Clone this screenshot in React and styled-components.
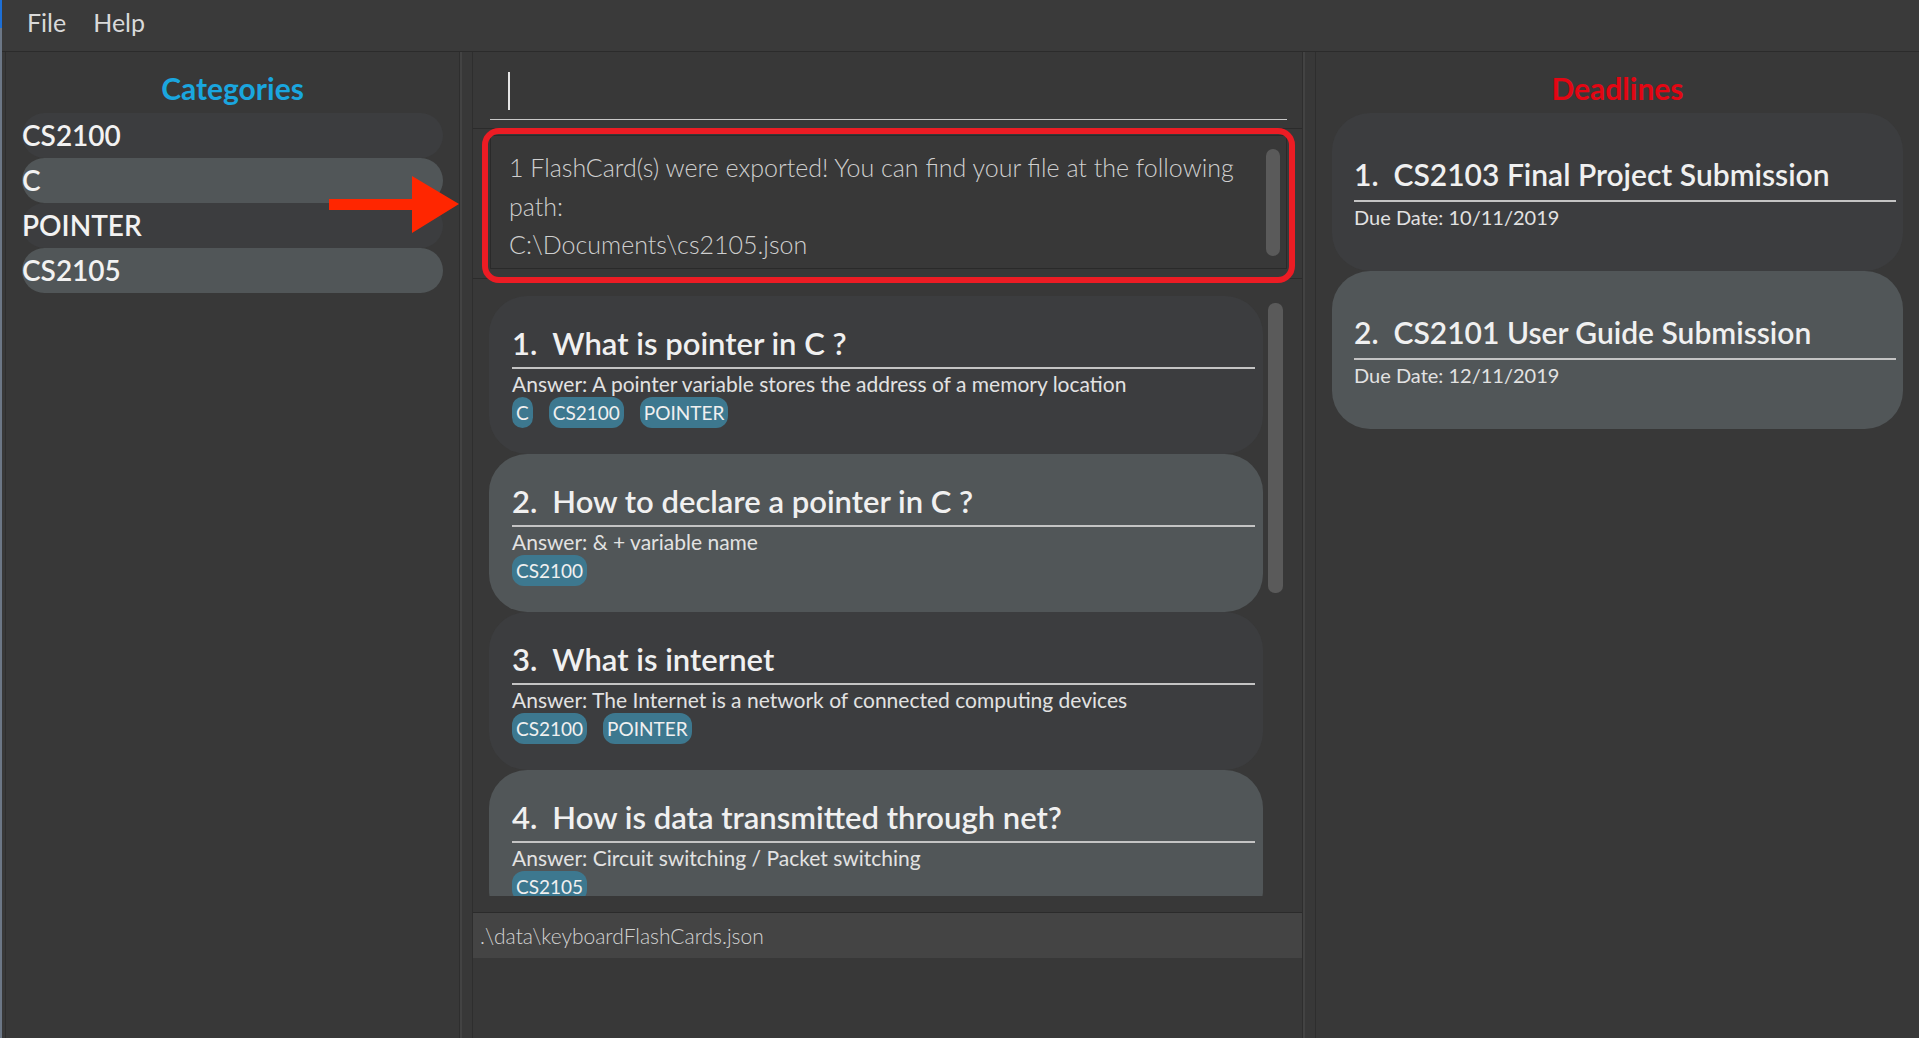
import React from 'react';
import styled, { createGlobalStyle } from 'styled-components';

const GlobalStyle = createGlobalStyle`
  *, *::before, *::after { box-sizing: border-box; }
  html, body { margin: 0; padding: 0; background: #383838; }
  body { font-family: Lato, "Open Sans", "Noto Sans", sans-serif; overflow: hidden; }
  #root { width: 1919px; height: 1038px; }
`;

const Window = styled.div`
  position: relative;
  width: 1919px;
  height: 1038px;
  display: flex;
  background: #383838;
  overflow: hidden;
`;

const Edge = styled.div`
  flex: none;
  width: 2px;
  background: linear-gradient(#1d6fd6 0 28px, #6c7786 28px);
`;

const Frame = styled.div`
  flex: 1;
  min-width: 0;
  display: flex;
  flex-direction: column;
`;

const MenuBar = styled.div`
  flex: none;
  height: 52px;
  background: #3a3a3a;
  border-bottom: 1px solid #2b2b2b;
  display: flex;
  align-items: center;
  gap: 27px;
  padding-left: 25px;
`;

const MenuItem = styled.span`
  font-size: 25px;
  line-height: 1;
  padding-bottom: 7px;
  color: #d9d9d9;
`;

const Main = styled.div`
  flex: 1;
  min-height: 0;
  display: flex;
  padding-left: 3px;
`;

const Panel = styled.div`
  display: flex;
  flex-direction: column;
  border-left: 1px solid #2e2e2e;
  border-right: 1px solid #2e2e2e;
  background: #383838;
`;

const SidePanel = styled(Panel)`
  flex: ${p => (p.$grow ? '1' : 'none')};
  width: ${p => (p.$grow ? 'auto' : '455px')};
  padding: 0 16px;
  border-right: ${p => (p.$grow ? 'none' : '1px solid #2e2e2e')};
`;

const CenterPanel = styled(Panel)`
  flex: none;
  width: 831px;
`;

const Divider = styled.div`
  flex: none;
  width: 12px;
  border-left: 2px solid #434343;
`;

const PanelTitle = styled.div`
  text-align: center;
  font-size: 30px;
  font-weight: 700;
  line-height: 36px;
  padding-top: 18px;
  margin-bottom: 7px;
  color: ${p => p.$color};
`;

const CategoryRow = styled.div`
  height: 45px;
  line-height: 45px;
  border-radius: 23px;
  background: ${p => (p.$alt ? '#515658' : '#3c3d3f')};
  color: #f2f2f2;
  font-size: 28px;
  font-weight: 600;
  white-space: nowrap;
`;

const CommandBox = styled.div`
  flex: none;
  height: 77px;
  border-bottom: 1px solid #2b2b2b;
  padding: 0 15px 0 17px;
`;

const TextField = styled.div`
  height: 68px;
  border-bottom: 1px solid #c8c8c8;
  padding: 20px 0 0 18px;
`;

const Caret = styled.div`
  width: 2px;
  height: 38px;
  background: #e6e6e6;
`;

const ResultArea = styled.div`
  position: relative;
  flex: none;
  height: 150px;
  border-bottom: 1px solid #2b2b2b;
  padding: 6px 15px 9px 17px;
`;

const ResultBox = styled.div`
  height: 100%;
  display: flex;
  border: 1px solid #2a2a2a;
  background: #383838;
`;

const ResultText = styled.div`
  flex: 1;
  padding: 12px 0 0 18px;
  font-size: 25px;
  font-weight: 300;
  line-height: 38.5px;
  color: #cfcfcf;
  white-space: nowrap;
  overflow: hidden;
`;

const Thumb = styled.div`
  flex: none;
  width: ${p => p.$w}px;
  height: ${p => (p.$h ? `${p.$h}px` : 'auto')};
  margin: ${p => p.$m};
  background: #5a5a5a;
  border-radius: 7px;
`;

const RedOutline = styled.div`
  position: absolute;
  top: -1px;
  left: 9px;
  right: 7px;
  bottom: -5px;
  border: 6px solid #ec1c24;
  border-radius: 17px;
  pointer-events: none;
`;

const ListArea = styled.div`
  flex: none;
  height: 634px;
  display: flex;
  align-items: flex-start;
  border-bottom: 1px solid #2b2b2b;
  padding: 17px 0 16px 16px;
`;

const CardViewport = styled.div`
  flex: none;
  width: 774px;
  height: 100%;
  overflow: hidden;
  display: flex;
  flex-direction: column;
`;

const Card = styled.div`
  flex: none;
  height: 158px;
  border-radius: 38px;
  background: ${p => (p.$alt ? '#515658' : '#3c3d3f')};
  padding: ${p => p.$pad};
`;

const CardTitle = styled.div`
  font-size: ${p => p.$size}px;
  font-weight: 600;
  line-height: 36px;
  color: #f0f0f0;
  white-space: nowrap;
`;

const Index = styled.span`
  margin-right: 15px;
`;

const Rule = styled.div`
  height: 2px;
  background: #c4c4c4;
  margin-top: ${p => p.$mt}px;
`;

const Detail = styled.div`
  font-size: ${p => p.$size}px;
  line-height: 25px;
  margin-top: ${p => p.$mt}px;
  color: #e2e2e2;
  white-space: nowrap;
`;

const Tags = styled.div`
  display: flex;
  gap: 16px;
  margin-top: 1px;
`;

const Tag = styled.span`
  height: 31px;
  line-height: 31px;
  padding: 0 4px;
  border-radius: 12px;
  background: #3d788f;
  color: #f0f0f0;
  font-size: 19px;
`;

const StatusBar = styled.div`
  flex: none;
  height: 45px;
  line-height: 45px;
  background: #444444;
  padding-left: 7px;
  font-size: 21px;
  font-weight: 300;
  color: #d2d2d2;
`;

const Arrow = styled.svg`
  position: absolute;
  left: 329px;
  top: 175px;
  pointer-events: none;
`;

const categories = ['CS2100', 'C', 'POINTER', 'CS2105'];

const flashcards = [
  { q: 'What is pointer in C ?', a: 'A pointer variable stores the address of a memory location', tags: ['C', 'CS2100', 'POINTER'] },
  { q: 'How to declare a pointer in C ?', a: '& + variable name', tags: ['CS2100'] },
  { q: 'What is internet', a: 'The Internet is a network of connected computing devices', tags: ['CS2100', 'POINTER'] },
  { q: 'How is data transmitted through net?', a: 'Circuit switching / Packet switching', tags: ['CS2105'] },
];

const deadlines = [
  { t: 'CS2103 Final Project Submission', d: '10/11/2019' },
  { t: 'CS2101 User Guide Submission', d: '12/11/2019' },
];

export default function App() {
  return (
    <Window>
      <GlobalStyle />
      <Edge />
      <Frame>
        <MenuBar>
          <MenuItem>File</MenuItem>
          <MenuItem>Help</MenuItem>
        </MenuBar>
        <Main>
          <SidePanel>
            <PanelTitle $color="#1aa6df">Categories</PanelTitle>
            {categories.map((c, i) => (
              <CategoryRow key={c} $alt={i % 2 === 1}>{c}</CategoryRow>
            ))}
          </SidePanel>
          <Divider />
          <CenterPanel>
            <CommandBox>
              <TextField>
                <Caret />
              </TextField>
            </CommandBox>
            <ResultArea>
              <ResultBox>
                <ResultText>
                  1 FlashCard(s) were exported! You can find your file at the following
                  <br />
                  path:
                  <br />
                  C:\Documents\cs2105.json
                </ResultText>
                <Thumb $w={14} $m="13px 6px 12px 0" />
              </ResultBox>
              <RedOutline />
            </ResultArea>
            <ListArea>
              <CardViewport>
                {flashcards.map((f, i) => (
                  <Card key={f.q} $alt={i % 2 === 1} $pad="29px 8px 0 23px">
                    <CardTitle $size={31}>
                      <Index>{i + 1}.</Index>
                      {f.q}
                    </CardTitle>
                    <Rule $mt={6} />
                    <Detail $size={21} $mt={2}>Answer: {f.a}</Detail>
                    <Tags>
                      {f.tags.map(t => (
                        <Tag key={t}>{t}</Tag>
                      ))}
                    </Tags>
                  </Card>
                ))}
              </CardViewport>
              <Thumb $w={15} $h={290} $m="7px 0 0 5px" />
            </ListArea>
            <StatusBar>.\data\keyboardFlashCards.json</StatusBar>
          </CenterPanel>
          <Divider />
          <SidePanel $grow>
            <PanelTitle $color="#e30613">Deadlines</PanelTitle>
            {deadlines.map((d, i) => (
              <Card key={d.t} $alt={i % 2 === 1} $pad="43px 7px 0 22px">
                <CardTitle $size={30}>
                  <Index>{i + 1}.</Index>
                  {d.t}
                </CardTitle>
                <Rule $mt={8} />
                <Detail $size={20} $mt={3}>Due Date: {d.d}</Detail>
              </Card>
            ))}
          </SidePanel>
        </Main>
      </Frame>
      <Arrow width="134" height="60" viewBox="0 0 134 60">
        <polygon points="0,24 83,24 83,1 130,29 83,58 83,35 0,35" fill="#ff2600" />
      </Arrow>
    </Window>
  );
}
